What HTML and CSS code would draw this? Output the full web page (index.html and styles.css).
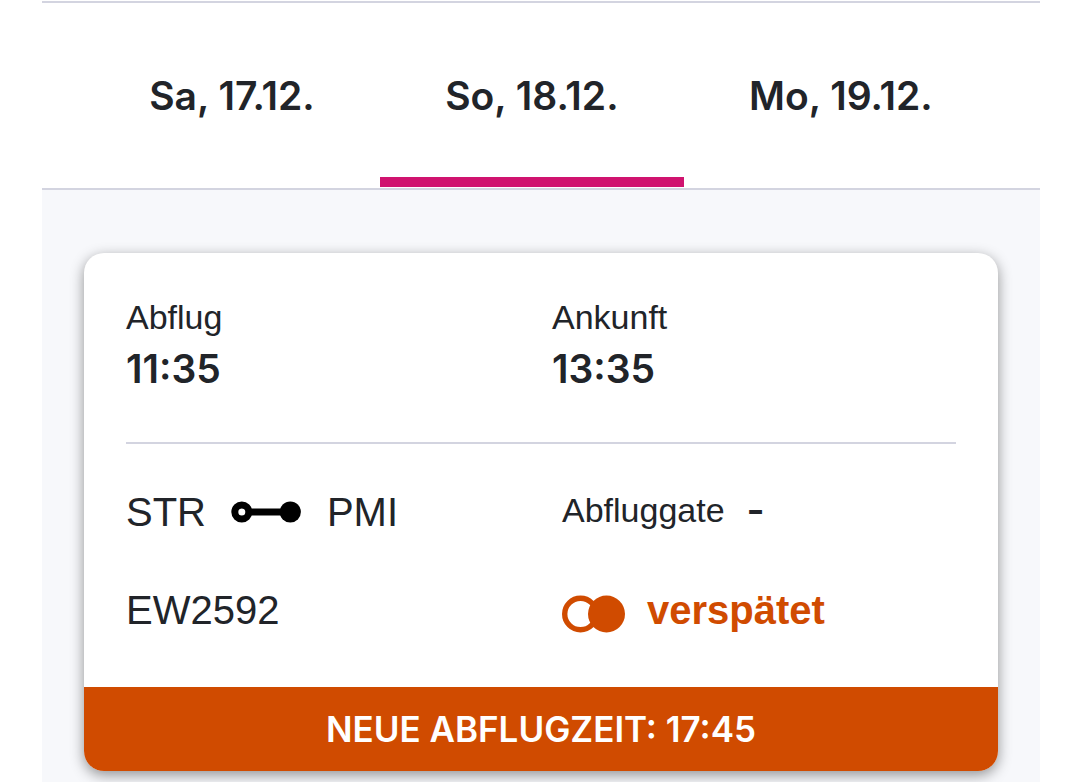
FILE: index.html
```html
<!DOCTYPE html>
<html lang="de">
<head>
  <meta charset="UTF-8">
  <meta name="viewport" content="width=device-width, initial-scale=1.0">
  <title>Flugstatus STR - PMI</title>
  <link rel="stylesheet" href="styles.css">
</head>
<body>
<div class="page">
  <nav class="days">
    <a href="#" class="day">Sa, 17.12.</a>
    <a href="#" class="day active">So, 18.12.</a>
    <a href="#" class="day">Mo, 19.12.</a>
  </nav>

  <main class="results">
    <article class="card">
      <div class="card-body">
        <div class="times">
          <div class="time">
            <div class="label">Abflug</div>
            <div class="value">11:35</div>
          </div>
          <div class="time">
            <div class="label">Ankunft</div>
            <div class="value">13:35</div>
          </div>
        </div>

        <div class="details">
          <div class="route">
            <span>STR</span>
            <svg width="70" height="22" viewBox="0 0 70 22">
              <path d="M11 11H59" stroke="#000" stroke-width="7"/>
              <circle cx="10.8" cy="11" r="7" fill="#fff" stroke="#000" stroke-width="7"/>
              <circle cx="59.3" cy="11" r="10.6"/>
            </svg>
            <span>PMI</span>
          </div>
          <div class="gate">
            <span class="label">Abfluggate</span>
            <span class="value">-</span>
          </div>
          <div class="flight">EW2592</div>
          <div class="status">
            <svg width="63" height="38" viewBox="0 0 63 38">
              <circle cx="18.5" cy="19" r="15.8" fill="none" stroke="#d04b00" stroke-width="5.4"/>
              <circle cx="44.5" cy="19" r="18.5" fill="#d04b00"/>
            </svg>
            <span>verspätet</span>
          </div>
        </div>
      </div>

      <div class="notice">NEUE ABFLUGZEIT: 17:45</div>
    </article>
  </main>
</div>
</body>
</html>
```
FILE: styles.css
```css
* {
  margin: 0;
  padding: 0;
  box-sizing: border-box;
}

body {
  font-family: 'Liberation Sans', Arial, sans-serif;
  background: #fff;
  color: #212429;
}

.page {
  margin: 1px 40px 0 42px;
}

.days {
  display: flex;
  padding: 0 42px 1px;
  border-top: 2px solid #d3d4e0;
  border-bottom: 2px solid #d3d4e0;
}

.day {
  flex: 1 1 auto;
  padding: 67px 0 56px;
  border-bottom: 10px solid transparent;
  color: inherit;
  font-size: 39px;
  line-height: 51px;
  text-align: center;
  text-decoration: none;
}

.day,
.value,
.notice {
  font-family: Inter, 'Liberation Sans', sans-serif;
  font-weight: 600;
}

.day.active {
  border-bottom-color: #d0136f;
}

.results {
  padding: 63px 42px 12px;
  background: #f7f8fb;
}

.card {
  overflow: hidden;
  background: #fff;
  border-radius: 20px;
  box-shadow: 0 4px 14px rgba(0, 0, 0, 0.42);
}

.card-body {
  padding: 42px 42px 49px;
}

.times {
  display: grid;
  grid-template-columns: 426px 1fr;
  padding-bottom: 43px;
  border-bottom: 2px solid #d3d4e0;
}

.label {
  font-size: 34px;
  line-height: 44px;
}

.value {
  font-size: 39px;
  line-height: 60px;
}

.details {
  display: grid;
  grid-template-columns: 436px 1fr;
  row-gap: 42px;
  padding-top: 40px;
}

.route,
.flight {
  font-size: 40px;
  line-height: 56px;
}

.route {
  display: flex;
  align-items: center;
  justify-content: space-between;
  width: 272px;
}

.gate {
  display: flex;
  align-items: center;
  gap: 22px;
  height: 52px;
}

.status {
  display: flex;
  align-items: center;
  gap: 22px;
  color: #d04b00;
  font-size: 40px;
  font-weight: 700;
  line-height: 56px;
}

.status svg {
  margin-top: 8px;
}

.notice {
  padding: 14px;
  background: #d04b00;
  color: #fff;
  font-size: 35px;
  line-height: 56px;
  text-align: center;
}
```
